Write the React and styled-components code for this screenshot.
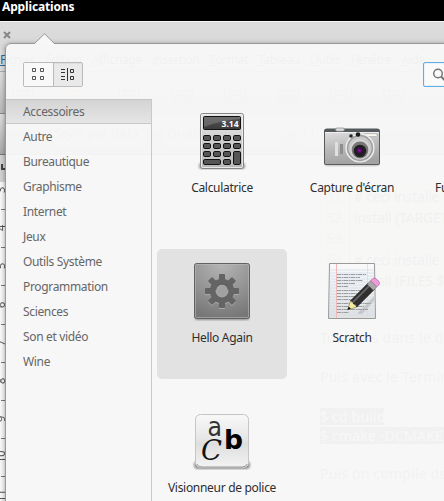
import React from "react";
import styled, { createGlobalStyle, css } from "styled-components";

const GlobalStyle = createGlobalStyle`
  * { box-sizing: border-box; }
  html, body { margin: 0; overflow: hidden; }
  body { font-family: "Noto Sans", "Open Sans", sans-serif; font-size: 12px; color: #333; }
`;

const Desktop = styled.div`
  position: relative;
  width: 444px;
  height: 501px;
  overflow: hidden;
  display: flex;
  flex-direction: column;
  background: #fff;
`;
const Panel = styled.header`
  flex: 0 0 21px;
  height: 21px;
  background: #000;
  color: #fff;
  padding: 0 0 0 2px;
  font-weight: 700;
  font-size: 12px;
  line-height: 13px;
  letter-spacing: -0.15px;
`;

/* Document window under the launcher */
const TitleBar = styled.div`
  flex: 0 0 29px;
  border-top: 1px solid #f5f5f5;
  background: linear-gradient(#dcdcdc, #d8d8d8);
  padding: 9px 0 0 3px;
  svg { display: block; }
`;
const MenuBar = styled.div`
  flex: 0 0 22px;
  display: flex;
  gap: 10px;
  line-height: 19px;
  letter-spacing: -0.35px;
  background: #ddd;
  border-bottom: 1px solid #aaa;
  white-space: nowrap;
  span::first-letter { text-decoration: underline; color: #256ca5; }
`;
const ToolBar = styled.div`
  flex: 0 0 42px;
  display: flex;
  align-items: center;
  gap: 29px;
  padding-left: 11px;
  background: linear-gradient(#ddd, #b8b8b8);
  border-bottom: 1px solid #888;
  svg { flex: none; }
`;
const FormatBar = styled.div`
  flex: 0 0 41px;
  display: flex;
  align-items: center;
  padding-left: 50px;
  gap: 14px;
  background: linear-gradient(#ddd, #a9a9a9);
  border-bottom: 1px solid #777;
  font-size: 13px;
`;
const Combo = styled.div`
  flex: none;
  width: ${(p) => p.$w}px;
  height: 26px;
  padding-left: 4px;
  border: 1px solid #bbb;
  background: #ddd;
  color: #777;
  line-height: 22px;
  white-space: nowrap;
`;
const Workspace = styled.div`
  flex: 1;
  display: flex;
  overflow: hidden;
  background: #f8f8f8;
`;
const Ruler = styled.div`
  flex: 0 0 6px;
  display: flex;
  flex-direction: column;
  overflow: hidden;
  margin-right: 314px;
`;
const RulerCorner = styled.div`
  flex: 0 0 27px;
  padding: 9px 0 0 1px;
  background: #d2d2d2;
  svg { display: block; }
`;
const RulerMark = styled.div`
  flex: 0 0 38.2px;
  width: 10px;
  margin-left: -4px;
  font-size: 11px;
  color: #555;
  span { display: block; height: 16px; margin-bottom: 11px; writing-mode: vertical-rl; transform: rotate(180deg); line-height: 10px; text-align: center; }
  &::after { content: ""; display: block; width: 4px; height: 1px; margin-left: 5px; background: #777; }
`;
const Doc = styled.div`
  flex: 1;
  font-size: 14px;
  letter-spacing: 0.2px;
  white-space: nowrap;
  line-height: 19px;
  padding-top: 31px;
`;
const Code = styled.div`
  height: 104px;
  background: #efe4da;
  border-left: 1px solid #ccc;
  line-height: 21px;
  letter-spacing: -0.2px;
`;
const CodeLine = styled.div`
  display: flex;
  height: 21px;
  b { flex: 0 0 29px; padding-left: 5px; margin-right: 4px; border-right: 1px solid #aaa; font-weight: 400; color: #888; }
`;
const Para = styled.div`
  margin-top: ${(p) => p.$top}px;
  color: #444;
`;
const Selected = styled.div`
  width: ${(p) => p.$w}px;
  height: 17px;
  line-height: 17px;
  margin-bottom: 2px;
  background: #444;
  color: #fff;
`;

/* Launcher popover */
const Popover = styled.section`
  position: absolute;
  left: 5px;
  top: 43px;
  width: 560px;
  height: 520px;
  border: 1px solid #999;
  border-radius: 6px;
  background: rgba(247, 247, 247, 0.97);
  box-shadow: 0 1px 5px rgba(0, 0, 0, 0.38);
`;
const Arrow = styled.svg`
  position: absolute;
  left: 27px;
  top: -11px;
  display: block;
`;
const Head = styled.div`
  display: flex;
  justify-content: space-between;
  height: 55px;
  padding: 18px 20px 0 17px;
`;
const Switcher = styled.div`
  display: flex;
  width: 60px;
  height: 25px;
  border: 1px solid #bbb;
  border-radius: 2px;
`;
const SwitchButton = styled.button`
  flex: 1;
  display: grid;
  place-items: center;
  padding: 0;
  border: 0;
  background: ${(p) => (p.$on ? "#e9e9e9" : "#f8f8f8")};
  ${(p) => p.$on && css`border-left: 1px solid #bbb; box-shadow: inset 0 1px 1px #ddd;`}
`;
const Search = styled.div`
  width: 121px;
  height: 25px;
  padding: 5px 8px;
  border: 1px solid #5eaee6;
  border-radius: 2px;
  background: #fafafa;
  box-shadow: inset 0 0 1px #5eaee6;
`;
const Body = styled.div`
  display: flex;
  height: 464px;
`;
const Sidebar = styled.nav`
  flex: 0 0 146px;
  border-right: 1px solid #c9c9c9;
`;
const Category = styled.div`
  height: 25px;
  padding-left: 17px;
  line-height: 26px;
  color: #666;
  letter-spacing: -0.34px;
  white-space: nowrap;
  ${(p) => p.$active && css`
    background: linear-gradient(#d4d4d4, #e5e5e5);
    border-top: 1px solid #c5c5c5;
    border-bottom: 1px solid #c8c8c8;
    line-height: 23px;
  `}
`;
const Grid = styled.div`
  display: grid;
  grid-template-columns: repeat(3, 130px);
  grid-auto-rows: 130px;
  row-gap: 20px;
  padding-left: 5px;
`;
const AppTile = styled.div`
  display: flex;
  flex-direction: column;
  align-items: ${(p) => (p.$start ? "flex-start" : "center")};
  padding: ${(p) => (p.$start ? "14px 0 0 18px" : "14px 0 0")};
  border-radius: 5px;
  background: ${(p) => (p.$active ? "#e2e2e2" : "transparent")};
  svg { display: block; overflow: visible; flex: none; }
`;
const AppLabel = styled.div`
  margin-top: 10px;
  line-height: 18px;
  color: #2e2e2e;
  letter-spacing: -0.3px;
  white-space: nowrap;
`;

const Calculator = () => (
  <svg width="56" height="56" viewBox="0 0 56 56">
    <defs>
      <linearGradient id="calc" x2="0" y2="1"><stop stopColor="#e6e6e6" /><stop offset="1" stopColor="#b9b9b9" /></linearGradient>
      <linearGradient id="lcd" x2="0" y2="1"><stop stopColor="#555" /><stop offset="1" stopColor="#3b3b3b" /></linearGradient>
      <filter id="soft"><feGaussianBlur stdDeviation="1" /></filter>
    </defs>
    <rect x="5" y="50" width="46" height="6" rx="2" fill="#777" opacity=".7" filter="url(#soft)" />
    <rect x="6.5" y=".5" width="43" height="55" rx="2" fill="url(#calc)" stroke="#858585" />
    <rect x="7.5" y="1.5" width="41" height="53" rx="1" fill="none" stroke="#f1f1f1" opacity=".8" />
    <rect x="9.5" y="3.5" width="37" height="13" rx="1" fill="url(#lcd)" stroke="#111" />
    <path d="M10 4H46V6Q28 7 10 14Z" fill="#888" opacity=".5" />
    <text x="44.5" y="14" textAnchor="end" fontFamily="Noto Sans" fontWeight="700" fontSize="8.5" fill="#fff">3.14</text>
    <g fill="#555" stroke="#111">
      {[22.5, 30.5, 38.5].map((y, r) => [9.5, 19.5, 29.5, 39.5].map((x, c) => !(r === 2 && c === 3) && (
        <rect key={x + "-" + y} x={x} y={y} width="7" height="5" rx="1.3" />
      )))}
      <rect x="39.5" y="38.5" width="7" height="13" rx="1.3" />
      <rect x="9.5" y="46.5" width="17" height="5" rx="1.3" />
      <rect x="29.5" y="46.5" width="7" height="5" rx="1.3" />
    </g>
  </svg>
);

const Camera = () => (
  <svg width="56" height="56" viewBox="0 0 56 56">
    <defs>
      <linearGradient id="cam" x1="0" y1="0" x2=".2" y2="1"><stop stopColor="#dedede" /><stop offset=".5" stopColor="#bbb" /><stop offset="1" stopColor="#a3a3a3" /></linearGradient>
      <radialGradient id="lens"><stop stopColor="#b000c8" /><stop offset=".5" stopColor="#4a1058" /><stop offset="1" stopColor="#17171c" /></radialGradient>
    </defs>
    <g transform="translate(0 6)">
      <rect x="1" y="43" width="54" height="4" rx="2" fill="#888" opacity=".5" filter="url(#soft)" />
      <path d="M3 9.5H53Q56 9.5 56 12V44Q56 46 54 46H2Q0 46 0 44V12Q0 9.5 3 9.5Z" fill="#555a5c" />
      <rect x="1" y="13" width="54" height="32" rx="1" fill="url(#cam)" />
      <path d="M1 13.5H55" stroke="#eee" />
      <rect x="11.5" y="9" width="9" height="3.2" rx="1.6" fill="#ddd" stroke="#777" strokeWidth=".6" />
      <rect x="11" y="23" width="3" height="14" fill="#e0e0e0" />
      <rect x="16" y="25" width="3" height="10" fill="#8d8f90" />
      <rect x="41" y="14.7" width="12" height="2.8" rx="1" fill="#faf9f1" stroke="#999" strokeWidth=".5" />
      <circle cx="36" cy="29" r="14" fill="#c8c8c8" stroke="#f2f2f2" strokeWidth="1.2" />
      <circle cx="36" cy="29" r="12.3" fill="none" stroke="#999" strokeWidth="1.2" />
      <circle cx="36" cy="30" r="10" fill="#d5d5d5" />
      <circle cx="36" cy="31" r="8.4" fill="#777" />
      <circle cx="36" cy="32" r="6.3" fill="#222" />
      <circle cx="35.3" cy="31.5" r="4" fill="url(#lens)" />
      <circle cx="27" cy="17" r="1.8" fill="#222" />
      <circle cx="34" cy="15.5" r="2.3" fill="#1b1b1b" />
    </g>
  </svg>
);

const Gear = () => (
  <svg width="56" height="56" viewBox="0 0 56 56">
    <defs>
      <radialGradient id="plate" cx=".5" cy="0" r="1"><stop stopColor="#b5b5b5" /><stop offset=".6" stopColor="#929292" /><stop offset="1" stopColor="#777" /></radialGradient>
    </defs>
    <rect x="1" y="52" width="54" height="5" rx="2" fill="#666" opacity=".7" filter="url(#soft)" />
    <rect x=".5" y=".5" width="55" height="55" rx="2" fill="url(#plate)" stroke="#616161" />
    <rect x="1.5" y="1.5" width="53" height="53" rx="1" fill="none" stroke="#bdbdbd" opacity=".55" />
    {[["#aaa", 1], ["#646464", 0]].map(([fill, dy]) => (
      <g key={dy} fill={fill} transform={`translate(28 ${28 + dy})`}>
        {[0, 45, 90, 135].map((a) => <rect key={a} x="-3" y="-17" width="6" height="34" rx=".8" transform={`rotate(${a})`} />)}
        <circle r="12.2" />
      </g>
    ))}
    <circle cx="28" cy="28" r="6" fill="#a1a1a1" stroke="#b4b4b4" strokeWidth=".7" />
    <path d="M22 27a6 6 0 0 1 12 0" fill="none" stroke="#555" strokeWidth=".6" />
  </svg>
);

const Notepad = () => (
  <svg width="56" height="56" viewBox="0 0 56 56">
    <defs><linearGradient id="paper" x2="0" y2="1"><stop stopColor="#fafafa" /><stop offset="1" stopColor="#e1e1e1" /></linearGradient></defs>
    <path d="M5.5 .5H50.5L51.5 55.5H4.5Z" fill="url(#paper)" stroke="#9a9a9a" />
    <g stroke="#cbdcef" strokeWidth=".7">
      {[7, 10, 13, 16, 19, 22, 25, 28, 31, 34, 37, 40, 43, 46, 49, 52].map((y) => <path key={y} d={`M6 ${y}H50`} />)}
      <path d="M43.5 1V54" />
    </g>
    <path d="M12.5 1V55" stroke="#f2b8b8" />
    <path d="M33 51L50 33V38L38 51Z" fill="#777" opacity=".25" />
    <path d="M13 11.5H42M13 14.5H36M13 17.5H39M13 20.5H31M13 23.5H24M13 27.5H41M13 30.5H37M13 33.5H41M13 36.5H29M13 40.5H47M13 43.5H40M13 46.5H44M13 49.5H25" fill="none" stroke="#9c9c9c" strokeDasharray="4 .6 2 .4" />
    <g transform="translate(23.5 47) rotate(-45) scale(1.09)">
      <path d="M0 0L8-4V4Z" fill="#f5eba0" stroke="#8c854c" strokeWidth=".6" />
      <path d="M0 0L3-1.5V1.5Z" fill="#111" />
      <path d="M8-4H31V4H8Q10 2 8 0Q10-2 8-4Z" fill="#303030" stroke="#111" strokeWidth=".6" />
      <path d="M9-1.5H30" stroke="#666" strokeWidth="1.6" />
      <rect x="29.5" y="-4" width="4.5" height="8" fill="#aaa" stroke="#666" strokeWidth=".5" />
      <path d="M34-4H37Q39-4 39 0T37 4H34Z" fill="#ed9cda" stroke="#aa649b" strokeWidth=".6" />
    </g>
  </svg>
);

const FontViewer = () => (
  <svg width="56" height="56" viewBox="0 0 56 56">
    <defs><linearGradient id="tile" x2="0" y2="1"><stop stopColor="#f8f8f8" /><stop offset=".45" stopColor="#e7e7e7" /><stop offset=".55" stopColor="#dedede" /><stop offset="1" stopColor="#f3f3f3" /></linearGradient></defs>
    <rect x="0" y="48" width="56" height="8" rx="4" fill="#555" opacity=".65" filter="url(#soft)" />
    <rect x="1.5" y="1.5" width="53" height="53" rx="5" fill="url(#tile)" stroke="#c5c5c5" />
    <path d="M3 51Q4 54 8 54H48Q52 54 53 51" stroke="#999" fill="none" />
    <text x="13.5" y="22.5" fontFamily="DejaVu Sans" fontSize="26" textLength="14.5" lengthAdjust="spacingAndGlyphs" fill="#333">a</text>
    <text x="7" y="47.3" fontFamily="DejaVu Serif" fontStyle="italic" fontSize="27" textLength="21" lengthAdjust="spacingAndGlyphs" fill="#111">C</text>
    <text x="30" y="36" fontFamily="DejaVu Sans" fontWeight="700" fontSize="26" textLength="19" lengthAdjust="spacingAndGlyphs" fill="#000">b</text>
  </svg>
);

const categories = ["Accessoires", "Autre", "Bureautique", "Graphisme", "Internet", "Jeux", "Outils Système", "Programmation", "Sciences", "Son et vidéo", "Wine"];
const apps = [
  { name: "Calculatrice", Icon: Calculator },
  { name: "Capture d'écran", Icon: Camera },
  { name: "Fu", start: true },
  { name: "Hello Again", Icon: Gear, active: true },
  { name: "Scratch", Icon: Notepad },
  { name: "", start: true },
  { name: "Visionneur de police", Icon: FontViewer },
];

const DocumentWindow = () => (
  <>
    <TitleBar>
      <svg width="8" height="8" viewBox="0 0 8 8"><path d="M1 1L7 7M7 1L1 7" stroke="#888" strokeWidth="2" /></svg>
    </TitleBar>
    <MenuBar>{["Fichier", "Édition", "Affichage", "Insertion", "Format", "Tableau", "Outils", "Fenêtre", "Aide"].map((m) => <span key={m}>{m}</span>)}</MenuBar>
    <ToolBar>
      {[0, 1, 2, 3, 4, 5, 6, 7].map((i) => (
        <svg key={i} width="24" height="24" viewBox="0 0 24 24" fill="none" stroke={i === 1 ? "#d99a45" : "#888"}><path d="M2 3H22V22H2ZM6 3V10H18V3M6 22V14H18V22" /></svg>
      ))}
    </ToolBar>
    <FormatBar>
      <Combo $w={98}>Style par défa</Combo>
      <Combo $w={120}>Droid Sans</Combo>
      <Combo $w={50}>11</Combo>
      <i>I</i>
    </FormatBar>
    <Workspace>
      <Ruler>
        <RulerCorner><svg width="5" height="6" viewBox="0 0 5 6"><path d="M1 0V5H5" fill="none" stroke="#444" strokeWidth="2" /></svg></RulerCorner>
        {[3, 4, 5, 6, 7, 8, 9, 10, 11].map((n) => <RulerMark key={n}><span>{n}</span></RulerMark>)}
      </Ruler>
      <Doc>
        <Code>
          {["# ceci installe le", "install (TARGETS", "", "# ceci installe le", "install (FILES ${C"].map((t, i) => (
            <CodeLine key={i}><b>{51 + i}.</b>{t}</CodeLine>
          ))}
        </Code>
        <Para $top={38}>Toujours dans le dossier</Para>
        <Para $top={20}>Puis avec le Terminal</Para>
        <Para $top={22}>
          <Selected $w={64}>$ cd build</Selected>
          <Selected $w={160}>$ cmake -DCMAKE_</Selected>
        </Para>
        <Para $top={20}>Puis on compile de</Para>
      </Doc>
    </Workspace>
  </>
);

export default function App() {
  return (
    <Desktop>
      <GlobalStyle />
      <Panel>Applications</Panel>
      <DocumentWindow />
      <Popover>
        <Arrow width="24" height="12" viewBox="0 0 24 12">
          <path d="M1 11.5L11.5 1L22 11.5V12H1Z" fill="#f7f7f7" />
          <path d="M0 10.5H1.5L11.5 .8L21.5 10.5H24" fill="none" stroke="#999" />
        </Arrow>
        <Head>
          <Switcher>
            <SwitchButton>
              <svg width="13" height="13" viewBox="0 0 13 13" fill="none" stroke="#555"><path d="M.5 .5H3.5V3.5H.5ZM8.5 .5H11.5V3.5H8.5ZM.5 8.5H3.5V11.5H.5ZM8.5 8.5H11.5V11.5H8.5Z" /></svg>
            </SwitchButton>
            <SwitchButton $on>
              <svg width="13" height="13" viewBox="0 0 13 13" fill="none" stroke="#333"><path d="M0 1.5H4M0 4.5H4M0 8.5H4M0 11.5H4M6.5 0V13M9.5 1.5H12.5V4.5H9.5ZM9.5 8.5H12.5V11.5H9.5Z" /></svg>
            </SwitchButton>
          </Switcher>
          <Search>
            <svg width="14" height="14" viewBox="0 0 14 14" fill="none" stroke="#777" strokeWidth="1.5"><circle cx="6" cy="5.5" r="4.3" /><path d="M9 8.5L13 12.5" strokeWidth="2" /></svg>
          </Search>
        </Head>
        <Body>
          <Sidebar>{categories.map((c, i) => <Category key={c} $active={i === 0}>{c}</Category>)}</Sidebar>
          <Grid>
            {apps.map(({ name, Icon, active, start }, i) => (
              <AppTile key={i} $active={active} $start={start}>
                {Icon ? <Icon /> : <svg width="56" height="56" />}
                <AppLabel>{name}</AppLabel>
              </AppTile>
            ))}
          </Grid>
        </Body>
      </Popover>
    </Desktop>
  );
}
